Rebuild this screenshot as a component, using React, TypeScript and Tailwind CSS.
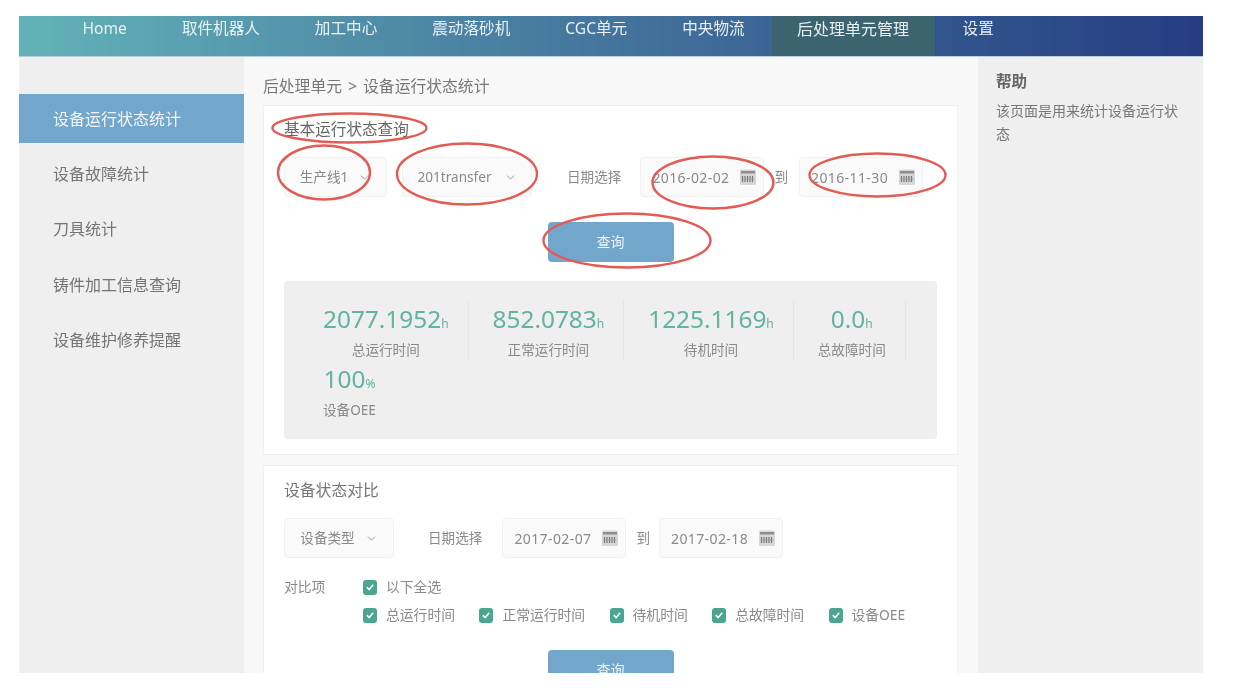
import React from "react";
import { ChevronDown } from "lucide-react";

const navItems = ["Home", "取件机器人", "加工中心", "震动落砂机", "CGC单元", "中央物流", "后处理单元管理", "设置"];
const sideItems = ["设备运行状态统计", "设备故障统计", "刀具统计", "铸件加工信息查询", "设备维护修养提醒"];
const stats = [
  { v: "2077.1952", u: "h", l: "总运行时间" },
  { v: "852.0783", u: "h", l: "正常运行时间" },
  { v: "1225.1169", u: "h", l: "待机时间" },
  { v: "0.0", u: "h", l: "总故障时间" },
  { v: "100", u: "%", l: "设备OEE" },
];

function CalendarIcon() {
  return (
    <svg width="18" height="18" viewBox="0 0 18 18" className="shrink-0">
      <rect x="1" y="1.5" width="16" height="15.5" rx="1.5" fill="#d6d6d6" />
      <rect x="2" y="3" width="14" height="2.5" fill="#8e8e8e" />
      <path d="M3.5 8v6M6 8v6M8.5 8v6M11 8v6M13.5 8v6" stroke="#777" strokeWidth="1.2" />
      <path d="M2.5 11h13" stroke="#999" strokeWidth="0.8" />
    </svg>
  );
}

function Select({ label, w, gap }: { label: string; w: string; gap: string }) {
  return (
    <div className={`h-10 ${w} flex items-center justify-center ${gap} rounded border border-[#f1f1f1] bg-[#fafafa] text-[13.6px] text-[#8a8a8a]`}>
      <span>{label}</span>
      <ChevronDown size={13} strokeWidth={1.6} color="#8f8f8f" />
    </div>
  );
}

function DateBox({ value }: { value: string }) {
  return (
    <div className="h-10 w-[124px] flex items-center justify-between pl-[11px] pr-[6px] rounded border border-[#f1f1f1] bg-[#fafafa] text-[14px] tracking-[0.4px] text-[#8a8a8a]">
      <span>{value}</span>
      <CalendarIcon />
    </div>
  );
}

function Check({ label }: { label: string }) {
  return (
    <div className="flex items-center gap-[9px]">
      <span className="w-[14px] h-[15px] rounded-[3px] bg-[#4aa591] flex items-center justify-center">
        <svg width="10" height="10" viewBox="0 0 10 10">
          <path d="M1.8 5.2 4.2 7.5 8.2 2.8" fill="none" stroke="#fff" strokeWidth="1.6" />
        </svg>
      </span>
      <span>{label}</span>
    </div>
  );
}

function QueryButton() {
  return (
    <div className="w-[126px] h-10 mx-auto pb-[2px] rounded bg-[#72a7cb] flex items-center justify-center text-[#eef4f8] text-[14px]">
      查询
    </div>
  );
}

export default function App() {
  return (
    <div
      className="relative w-[1238px] h-[688px] overflow-hidden bg-white pt-4 pl-[19px] blur-[0.7px]"
      style={{ fontFamily: '"Noto Sans", "Noto Sans CJK SC", sans-serif' }}
    >
      <div className="w-[1184px] h-[657px] overflow-hidden flex flex-col bg-[#f8f8f8]">
        <nav className="h-[41px] shrink-0 flex pl-[36px] items-stretch border-b border-[#b9cdd8] bg-gradient-to-r from-[#63b2b8] via-[#44749c] to-[#263c82] text-[15.6px] text-[#e8f1f3]">
          {navItems.map((n) => (
            <div
              key={n}
              className={
                n === "后处理单元管理"
                  ? "pl-[25px] pr-[26px] pb-[15px] flex items-center text-[16px] bg-[#3c6470]"
                  : "px-[27.5px] pb-[15px] flex items-center"
              }
            >
              {n}
            </div>
          ))}
        </nav>
        <div className="flex-1 flex min-h-0">
          <aside className="w-[225px] shrink-0 bg-[#efefef] pt-[37px] flex flex-col gap-[6.2px] text-[16px] text-[#757575]">
            {sideItems.map((s, i) => (
              <div
                key={s}
                className={`h-[49px] flex items-center pl-[34px] pt-[1px] ${i === 0 ? "bg-[#72a7cb] text-[#f2f6f9]" : ""}`}
              >
                {s}
              </div>
            ))}
          </aside>
          <main className="w-[734px] shrink-0 pl-[19px] pr-5">
            <div className="h-[48px] pt-[17px] text-[15.8px] leading-6 text-[#777]">
              后处理单元<span className="mx-[6px]">&gt;</span>设备运行状态统计
            </div>
            <section className="h-[350px] bg-white border border-[#f0f0f0] px-5 pt-[11px]">
              <div className="h-6 leading-6 text-[15.6px] text-[#666]">基本运行状态查询</div>
              <div className="mt-[16px] flex items-center text-[13.6px] text-[#8a8a8a]">
                <Select label="生产线1" w="w-[103px]" gap="gap-[10px]" />
                <div className="w-[15px]" />
                <Select label="201transfer" w="w-[130px]" gap="gap-[12px]" />
                <span className="ml-[35px] mr-[19px]">日期选择</span>
                <DateBox value="2016-02-02" />
                <span className="ml-[10px] mr-[11px]">到</span>
                <DateBox value="2016-11-30" />
              </div>
              <div className="mt-[25px]">
                <QueryButton />
              </div>
              <div className="mt-[19px] h-[158px] rounded bg-[#efefef] px-[15px] pt-[19px]">
                <div className="flex flex-wrap">
                  {stats.map((s, i) => (
                    <div
                      key={s.l}
                      className={`h-[60px] pl-[24px] pr-[19px] text-center ${i < 4 ? "border-r border-[#e6e6e6]" : ""}`}
                    >
                      <div className="h-[38px] leading-[38px] text-[24.4px] text-[#62b3a2] whitespace-nowrap">
                        {s.v}
                        <span className="text-[12px]">{s.u}</span>
                      </div>
                      <div className="mt-[3px] leading-[18px] text-[13.6px] text-[#8a8a8a] whitespace-nowrap">{s.l}</div>
                    </div>
                  ))}
                </div>
              </div>
            </section>
            <section className="mt-[10px] h-[300px] bg-white border border-[#f0f0f0] px-5 pt-[12px]">
              <div className="h-6 leading-6 text-[15.8px] text-[#777]">设备状态对比</div>
              <div className="mt-[16px] flex items-center text-[13.6px] text-[#8a8a8a]">
                <Select label="设备类型" w="w-[110px]" gap="gap-[10px]" />
                <span className="ml-[34px] mr-[20px]">日期选择</span>
                <DateBox value="2017-02-07" />
                <span className="ml-[10px] mr-[9px]">到</span>
                <DateBox value="2017-02-18" />
              </div>
              <div className="mt-[19px] flex text-[13.8px] text-[#8a8a8a]">
                <div className="w-[79px] leading-5">对比项</div>
                <div className="flex flex-col gap-2">
                  <div className="h-5 flex items-center">
                    <Check label="以下全选" />
                  </div>
                  <div className="h-5 flex items-center gap-[24.4px]">
                    {stats.map((s) => (
                      <Check key={s.l} label={s.l} />
                    ))}
                  </div>
                </div>
              </div>
              <div className="mt-[25px]">
                <QueryButton />
              </div>
            </section>
          </main>
          <aside className="flex-1 bg-[#efefef] pl-[18px] pr-[25px] pt-[12px] text-[#777]">
            <div className="h-6 leading-6 text-[15.6px] font-bold text-[#666]">帮助</div>
            <p className="mt-[6px] text-[14px] leading-[23px]">该页面是用来统计设备运行状态</p>
          </aside>
        </div>
      </div>
      <svg
        className="absolute left-0 top-0 pointer-events-none"
        width="1238"
        height="688"
        viewBox="0 0 1238 688"
        fill="none"
        stroke="#e25b54"
        strokeWidth="2.4"
      >
        <ellipse cx="349.5" cy="128" rx="77" ry="14.5" />
        <ellipse cx="324" cy="172.5" rx="46" ry="27" />
        <ellipse cx="467" cy="174" rx="70" ry="30.5" />
        <ellipse cx="713" cy="182.5" rx="60.5" ry="26" />
        <ellipse cx="877.5" cy="175" rx="68" ry="21.5" />
        <ellipse cx="627" cy="240.5" rx="83.5" ry="27" />
      </svg>
    </div>
  );
}
